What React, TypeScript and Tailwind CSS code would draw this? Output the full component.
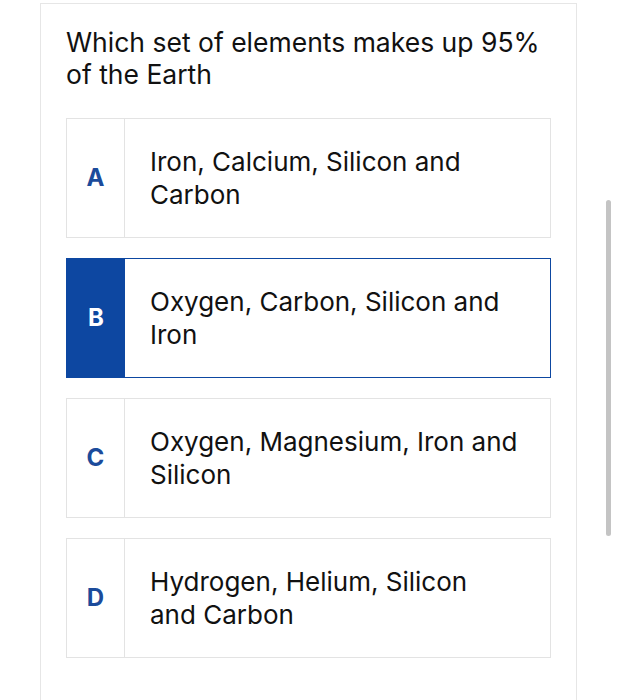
const options = [
  { key: 'A', lines: ['Iron, Calcium, Silicon and', 'Carbon'] },
  { key: 'B', lines: ['Oxygen, Carbon, Silicon and', 'Iron'] },
  { key: 'C', lines: ['Oxygen, Magnesium, Iron and', 'Silicon'] },
  { key: 'D', lines: ['Hydrogen, Helium, Silicon', 'and Carbon'] },
];

export default function App() {
  const selected = 'B';
  return (
    <div className="relative h-[700px] w-[617px] overflow-hidden bg-white" style={{ fontFamily: 'Inter, "Liberation Sans", sans-serif' }}>
      <div className="ml-[40px] mt-[3px] h-[720px] w-[537px] border border-[#e6e6e6] px-[25px] pt-[22px]">
        <h1 className="w-[480px] text-[26.5px] leading-[32px] text-[#111]">
          Which set of elements makes up 95% of the Earth
        </h1>
        <div className="mt-[28px] flex flex-col gap-[20px]">
          {options.map((o) => {
            const on = o.key === selected;
            return (
              <div
                key={o.key}
                className={
                  on
                    ? 'flex h-[120px] w-[485px] border border-[#0d47a1] bg-white'
                    : 'flex h-[120px] w-[485px] border border-[#e3e3e3] bg-white'
                }
              >
                <div
                  className={
                    on
                      ? 'flex w-[58px] shrink-0 items-center justify-center bg-[#0d47a1] text-[24px] font-bold text-white'
                      : 'flex w-[58px] shrink-0 items-center justify-center border-r border-[#e3e3e3] text-[24px] font-bold text-[#1b4b9b]'
                  }
                >
                  {o.key}
                </div>
                <div className="flex items-center pl-[25px] pr-[10px]">
                  <p className="whitespace-nowrap text-[26px] leading-[33px] text-[#111]">
                    {o.lines[0]}
                    <br />
                    {o.lines[1]}
                  </p>
                </div>
              </div>
            );
          })}
        </div>
      </div>
      <div className="absolute left-[606px] top-[200px] h-[336px] w-[5px] rounded-full bg-[#c4c4c4]" />
    </div>
  );
}
